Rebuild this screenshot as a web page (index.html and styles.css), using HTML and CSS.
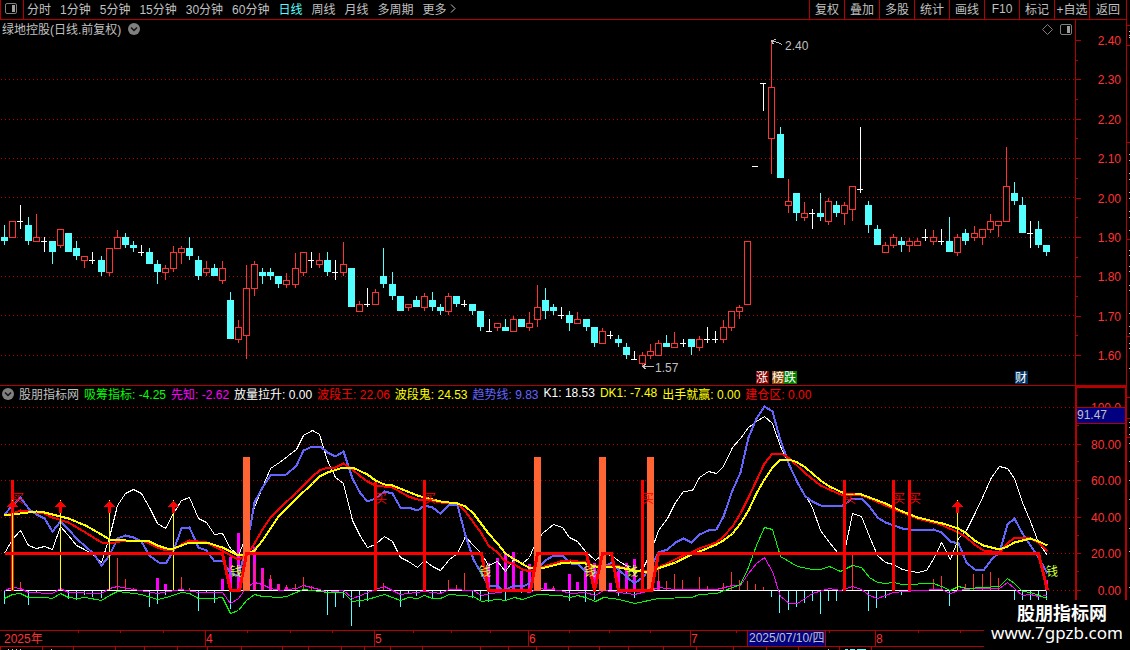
FILE: index.html
```html
<!DOCTYPE html>
<html lang="zh-CN">
<head>
    <meta charset="utf-8">
    <title>绿地控股 日线</title>
    <link rel="stylesheet" href="styles.css">
</head>
<body>
    <div class="app">
        <div class="main">
            <div class="topbar">
                <button class="panel-toggle" aria-label="侧栏">
                    <svg width="12" height="11" viewBox="0 0 12 11"><rect x="0.5" y="0.5" width="11" height="10" rx="1.5" fill="none" stroke="#808080"/><rect x="7" y="2" width="3" height="7" fill="#a0a0a0"/></svg>
                </button>
                <nav class="periods">
                    <button>分时</button>
                    <button>1分钟</button>
                    <button>5分钟</button>
                    <button>15分钟</button>
                    <button>30分钟</button>
                    <button>60分钟</button>
                    <button class="active">日线</button>
                    <button>周线</button>
                    <button>月线</button>
                    <button>多周期</button>
                    <button class="more">更多<svg width="6" height="9" viewBox="0 0 6 9"><path d="M1 0.5L5 4.5L1 8.5" fill="none" stroke="#c0c0c0"/></svg></button>
                </nav>
                <div class="tools">
                    <button>复权</button>
                    <button>叠加</button>
                    <button>多股</button>
                    <button>统计</button>
                    <button>画线</button>
                    <button>F10</button>
                    <button>标记</button>
                    <button>+自选</button>
                    <button>返回</button>
                </div>
            </div>

            <div class="pane price">
                <svg id="price-chart" class="chart"></svg>
                <div class="pane-head">
                    <span>绿地控股(日线.前复权)</span>
                    <button class="round" aria-label="菜单">
                        <svg width="12" height="12" viewBox="0 0 12 12"><circle cx="6" cy="6" r="6" fill="#808080"/><path d="M3 4.5L6 7.5L9 4.5" fill="none" stroke="#111" stroke-width="1.5"/></svg>
                    </button>
                    <div class="corner">
                        <svg width="11" height="11" viewBox="0 0 11 11"><path d="M5.5 0.5L10.5 5.5L5.5 10.5L0.5 5.5Z" fill="none" stroke="#808080"/></svg>
                        <svg width="12" height="11" viewBox="0 0 12 11"><rect x="0.5" y="0.5" width="11" height="10" rx="1.5" fill="none" stroke="#808080"/><rect x="7" y="2" width="3" height="7" fill="#a0a0a0"/></svg>
                    </div>
                </div>
            </div>

            <div class="pane indicator">
                <svg id="indicator-chart" class="chart"></svg>
                <div class="pane-head legend">
                    <button class="round" aria-label="指标菜单">
                        <svg width="12" height="12" viewBox="0 0 12 12"><circle cx="6" cy="6" r="6" fill="#808080"/><path d="M3 4.5L6 7.5L9 4.5" fill="none" stroke="#111" stroke-width="1.5"/></svg>
                    </button>
                    <span>股朋指标网</span>
                    <span class="green">吸筹指标: -4.25</span>
                    <span class="magenta">先知: -2.62</span>
                    <span class="white">放量拉升: 0.00</span>
                    <span class="red">波段王: 22.06</span>
                    <span class="yellow">波段鬼: 24.53</span>
                    <span class="blue">趋势线: 9.83</span>
                    <span class="white">K1: 18.53</span>
                    <span class="yellow">DK1: -7.48</span>
                    <span class="yellow">出手就赢: 0.00</span>
                    <span class="red">建仓区: 0.00</span>
                </div>
            </div>

            <div class="timeline">
                <svg id="time-axis" class="chart"></svg>
            </div>
            <div class="strip">
                <svg id="strip" class="chart"></svg>
            </div>
        </div>
        <div class="side">
            <svg id="side" class="chart"></svg>
        </div>
        <div class="watermark">
            <strong>股朋指标网</strong>
            <span>www.7gpzb.com</span>
        </div>
    </div>
    <script src="chart.js"></script>
</body>
</html>
```
FILE: styles.css
```css
* {
    box-sizing: border-box;
}

body {
    margin: 0;
    background-color: #000;
    color: #c0c0c0;
    font-family: "Liberation Sans", "Noto Sans CJK SC", sans-serif;
    font-size: 12px;
}

button {
    padding: 0;
    border: 0;
    background: none;
    color: inherit;
    font: inherit;
    white-space: nowrap;
    cursor: pointer;
}

.app {
    position: relative;
    display: flex;
    height: 100vh;
    overflow: hidden;
}

.main {
    flex: 1;
    min-width: 0;
    display: flex;
    flex-direction: column;
}

.side {
    position: relative;
    width: 4px;
    border-left: 1px solid #b40000;
}

/* top bar */
.topbar {
    flex: none;
    display: flex;
    height: 20px;
    border-bottom: 1px solid #b40000;
}

.topbar button {
    padding-bottom: 2px;
}

.panel-toggle {
    display: flex;
    align-items: center;
    justify-content: center;
    width: 24px;
    padding-right: 2px;
    border-left: 1px solid #b40000;
    border-right: 1px solid #b40000;
}

.periods {
    display: flex;
    flex: 1;
    gap: 9px;
    padding-left: 3px;
}

.periods .active {
    color: #54ffff;
}

.more {
    display: flex;
    align-items: center;
    gap: 3px;
}

.tools {
    display: flex;
}

.tools button {
    width: 35px;
    border-left: 1px solid #b40000;
}

.tools button:last-child {
    width: 37px;
}

/* chart panes */
.pane {
    position: relative;
    min-height: 0;
}

.price {
    flex: 366;
    border-bottom: 1px solid #b40000;
}

.indicator {
    flex: 244;
}

.chart {
    position: absolute;
    inset: 0;
    width: 100%;
    height: 100%;
    shape-rendering: crispEdges;
}

.chart text {
    font-size: 12px;
}

.pane-head {
    position: absolute;
    top: 0;
    left: 0;
    right: 0;
    display: flex;
    align-items: center;
    gap: 7px;
    height: 18px;
    padding-left: 2px;
    white-space: nowrap;
}

.pane-head span {
    padding-bottom: 2px;
}

.legend {
    gap: 5px;
    height: 16px;
}

.round {
    display: flex;
}

.corner {
    display: flex;
    gap: 7px;
    margin-left: auto;
    padding-right: 54px;
}

.timeline {
    position: relative;
    flex: none;
    height: 17px;
    border-top: 1px solid #b40000;
    border-bottom: 1px solid #b40000;
}

.strip {
    position: relative;
    flex: none;
    height: 3px;
}

.green { color: #00ff00; }
.magenta { color: #ff00ff; }
.white { color: #fff; }
.red { color: #ff0000; }
.yellow { color: #ffff00; }
.blue { color: #6464ff; }

.watermark {
    position: absolute;
    right: 0;
    bottom: 0;
    display: flex;
    flex-direction: column;
    align-items: center;
    width: 146px;
    height: 50px;
    padding-top: 3px;
    background-color: #000;
    color: #fff;
}

.watermark strong {
    padding-left: 10px;
    font-size: 18px;
    line-height: 22px;
}

.watermark span {
    font-family: "Noto Sans", "Open Sans", sans-serif;
    font-size: 17px;
    line-height: 16px;
}
```
FILE: chart.js
```js
const RED = '#b40000', UP = '#ff3232', DOWN = '#54ffff';

// one row per day: kind, high, body top, body bottom, low
// u = up (hollow), d = down (filled), w = open equals close
const candles = `
d 225 237 241 245|u 221 221 238 238|w 205 221 222 229|d 217 225 241 245|u 214 237 242 242|w 237 241 242 252
d 241 241 252 264|u 229 229 246 248|d 233 233 252 252|d 241 248 256 260|u 256 256 261 268|w 252 260 261 264
d 256 260 272 276|u 248 248 273 276|u 230 237 249 249|d 233 237 245 248|d 241 245 248 252|w 245 252 253 256
d 248 252 264 264|d 260 264 272 284|u 265 268 273 280|u 246 252 269 272|u 246 248 253 264|d 237 248 256 260
d 256 260 276 280|u 261 268 273 276|d 264 268 276 276|u 261 268 281 284|d 292 300 339 339|u 320 327 340 343
u 265 288 336 359|u 261 264 289 296|d 268 272 276 284|d 268 272 276 280|d 276 276 284 288|u 273 280 285 288
u 253 268 285 288|u 252 252 273 276|w 252 260 261 268|u 253 260 265 268|d 252 260 272 276|w 260 272 273 280
u 242 264 273 276|d 268 268 307 307|u 301 304 312 312|w 288 304 305 307|u 289 292 305 305|d 248 276 284 288
d 272 284 296 300|d 296 296 311 311|u 304 304 308 311|d 296 300 307 307|u 293 296 308 311|d 292 300 307 311
d 304 307 311 315|u 293 296 312 315|d 296 296 304 307|w 300 304 305 307|d 304 304 311 315|d 311 311 327 331
w 319 331 332 332|u 323 323 328 331|d 319 327 331 331|u 316 319 332 332|d 319 319 327 327|u 312 323 328 331
u 285 307 320 327|d 288 300 311 319|d 304 307 311 315|w 307 315 316 319|d 311 315 323 331|u 312 319 324 324
d 319 319 327 331|d 327 327 343 347|u 328 331 344 344|w 331 335 336 339|d 335 339 343 347|d 343 347 355 359
w 351 359 360 360|u 352 355 364 366|u 344 351 356 359|u 340 343 356 356|d 335 343 347 347|u 332 343 348 348
w 339 343 344 347|d 339 339 347 355|u 336 339 348 351|w 327 339 340 343|w 331 339 340 343|u 320 327 340 343
u 311 311 328 331|u 305 307 312 319|u 241 241 305 305|w 166 166 167 167|w 83 83 84 111|u 40 87 139 174
d 127 134 178 178|u 179 201 206 213|d 193 193 213 221|u 202 213 218 221|w 209 213 214 229|d 193 213 217 221
u 198 201 222 225|d 201 205 213 217|u 202 205 214 225|u 186 186 210 221|w 127 189 190 193|d 201 205 225 233
d 225 229 245 245|u 242 245 253 253|u 234 237 246 248|d 237 241 245 252|u 238 241 246 252|u 238 241 246 246
w 229 237 238 241|u 230 237 242 245|w 229 241 242 245|d 217 241 252 252|u 234 237 253 256|d 229 233 241 245
u 226 233 238 241|u 229 229 238 245|u 214 221 230 233|u 221 221 226 237|u 147 186 222 222|d 182 193 201 205
d 197 205 233 233|w 221 233 234 248|d 221 229 245 248|d 245 245 252 256
`.trim().split(/[|\n]/).map(row => row.split(' '));

const k1 = '4,553 12,539 20,530 28,545 36,548 44,546 52,549 60,526 68,535 76,545 84,549 92,554 101,562 109,537 117,505 125,493 133,489 141,493 149,507 157,523 165,528 173,513 181,500 189,497 198,518 206,522 214,534 222,533 230,548 238,555 246,535 254,507 262,487 270,468 279,462 296,449 303,435 312,430 319,434 327,460 335,477 343,483 352,520 360,536 367,547 375,544 384,536 392,541 400,557 408,561 417,567 424,560 432,566 440,570 449,559 457,553 465,536 473,545 481,553 488,565 497,561 505,571 514,558 522,563 529,557 533,547 542,533 553,524 562,527 569,537 577,541 585,551 595,560 603,553 611,555 619,561 627,566 634,573 643,567 650,553 658,530 667,518 675,502 683,491 692,490 699,477 708,471 716,473 723,466 732,447 740,438 748,427 756,421 764,416 772,423 780,446 789,465 797,482 805,495 812,507 820,530 829,542 837,552 844,552 852,513 861,516 869,536 877,555 885,562 893,564 902,569 917,572 926,570 934,557 941,542 950,559 958,538 966,530 974,514 983,495 991,477 999,466 1007,468 1014,478 1022,502 1030,521 1038,542 1047,555';
const trend = '4,514 12,505 20,497 28,508 36,514 44,518 52,531 60,521 68,529 77,539 93,553 101,565 109,555 117,538 125,535 133,537 141,541 149,555 158,562 166,562 173,550 181,528 189,527 198,547 206,550 214,561 222,560 230,573 238,575 243,557 250,525 254,502 262,487 270,475 286,474 296,465 303,450 312,446 320,446 327,452 335,456 343,451 352,478 360,493 367,501 375,498 384,491 392,493 400,507 408,507 417,510 424,505 432,507 440,513 449,504 457,505 465,535 473,559 481,573 488,585 497,585 501,589 505,589 514,585 522,586 529,583 537,568 545,560 553,555 562,555 570,563 577,563 585,571 595,573 603,567 611,562 619,570 627,577 634,583 643,576 650,567 658,552 667,549 675,542 683,538 691,542 699,534 708,530 716,529 723,516 732,490 740,472 748,437 756,418 764,406 772,411 780,440 789,465 797,482 805,496 812,501 820,505 840,506 844,504 852,498 861,498 869,506 877,517 885,522 902,528 917,530 933,529 941,532 950,541 958,543 966,562 974,569 983,570 991,559 999,552 1007,524 1014,518 1022,533 1030,545 1038,557 1047,573';
const king = '4,515 12,513 20,510 28,511 44,513 52,517 68,522 85,532 101,542 109,543 125,540 141,540 149,543 157,547 166,550 173,549 181,544 189,540 206,542 222,550 230,555 238,559 246,555 254,543 262,529 270,517 280,507 296,492 312,476 319,470 327,467 335,467 343,463 352,469 360,476 367,481 375,485 392,487 408,496 417,499 432,500 440,502 457,503 465,511 473,522 481,533 488,545 497,552 505,561 514,564 522,569 530,571 537,568 560,561 570,560 585,562 595,566 610,565 619,566 634,570 647,571 658,567 683,555 691,552 699,548 716,542 723,536 732,526 740,513 748,497 756,480 764,463 772,453 781,453 789,458 805,473 820,485 840,494 861,495 869,498 885,505 902,512 917,518 940,524 958,532 966,537 974,544 983,550 999,552 1007,543 1014,537 1027,537 1038,542 1047,551';
const ghost = '4,515 12,514 28,512 36,511 44,512 60,516 68,518 85,525 101,534 109,539 125,540 141,540 149,541 157,545 166,548 173,548 181,545 189,542 206,542 222,547 230,551 238,555 246,554 254,550 262,540 270,528 278,516 286,508 296,498 312,483 319,476 327,472 343,467 352,467 367,474 375,480 384,484 392,485 417,495 424,497 440,501 457,503 465,506 473,513 488,533 497,543 505,553 514,559 530,568 545,567 560,563 570,562 585,563 595,566 619,567 634,570 647,572 660,567 675,562 691,554 699,551 716,544 723,540 732,533 740,523 748,510 756,493 764,479 772,467 780,459 789,459 797,462 805,467 820,480 829,486 844,493 861,494 869,497 885,503 893,507 902,511 917,517 942,523 958,528 966,533 974,540 983,545 999,549 1007,546 1014,542 1030,538 1038,541 1047,545';
const area = '4,553 222,553 230,590 239,590 246,553 481,553 488,590 530,590 537,553 586,553 594,590 602,553 611,553 618,590 651,590 658,553 1038,553 1047,590';
const collect = '4,598 12,594 20,593 28,597 44,597 52,598 60,593 68,597 77,598 85,597 101,600 109,595 117,591 141,594 157,599 166,597 181,592 189,593 198,598 214,598 222,597 230,613 238,610 246,600 254,594 262,596 280,597 286,596 303,589 312,590 327,592 343,592 352,601 367,599 384,594 400,600 408,597 417,598 424,595 432,598 440,598 449,594 473,596 481,601 497,599 505,600 514,597 522,599 537,594 560,595 570,597 577,595 585,597 595,601 603,597 619,599 634,603 658,598 691,597 699,594 716,593 732,587 740,584 748,567 756,545 764,527 772,529 780,556 797,566 812,569 820,569 829,566 840,571 844,569 852,565 861,567 869,577 877,582 885,583 893,582 902,584 933,583 941,586 950,590 958,586 966,588 999,586 1007,578 1014,583 1022,591 1030,592 1047,598';
const prophet = '4,590 12,587 20,588 28,592 52,593 60,588 68,592 101,593 109,588 117,586 133,589 157,593 181,589 198,592 222,592 230,603 238,598 246,587 254,582 262,584 270,588 280,590 296,588 303,585 319,589 327,592 343,590 352,598 360,595 375,589 384,586 400,594 424,591 440,593 449,589 473,590 481,595 497,592 514,590 530,592 537,588 560,590 570,593 585,592 595,595 603,590 619,592 634,594 650,590 658,587 675,589 716,589 732,585 740,585 748,573 756,563 764,557 772,571 780,596 789,603 797,603 812,593 829,588 840,590 852,586 861,589 869,595 877,598 893,592 917,590 941,589 950,593 958,590 974,588 999,588 1007,582 1014,588 1022,595 1030,594 1038,596 1047,595';

// histogram bars: x and the end away from the zero line
const magentaBars = [[157,578],[165,584],[222,579],[230,557],[238,533],[254,547],[262,568],[270,579],[278,584],[286,587],[488,563],[497,558],[505,554],[513,552],[521,571],[529,564],[545,583],[553,588],[569,574],[577,582],[585,567],[594,563],[610,583],[618,571],[626,563],[634,559],[658,581],[1046,580]];
const redTicks = [[20,582],[117,558],[125,579],[133,588],[181,577],[189,588],[254,563],[262,571],[270,575],[278,584],[286,585],[295,584],[303,577],[311,586],[383,583],[424,583],[448,580],[456,585],[464,573],[553,586],[642,571],[658,567],[666,581],[674,574],[682,580],[699,577],[707,586],[723,583],[731,572],[739,580],[747,581],[755,584],[763,587],[852,555],[933,579],[941,576],[965,584],[973,574],[982,574],[990,572],[998,578]];
const cyanTicks = [[4,604],[28,605],[36,593],[68,599],[76,600],[84,595],[92,597],[101,598],[149,607],[157,604],[165,595],[198,611],[206,593],[214,603],[230,609],[327,615],[335,607],[343,598],[351,626],[359,607],[367,601],[400,607],[408,593],[416,596],[432,598],[440,593],[472,598],[480,600],[488,602],[505,600],[521,593],[569,601],[585,602],[594,600],[618,596],[626,594],[634,598],[771,597],[779,613],[788,610],[796,607],[804,603],[812,601],[820,614],[828,601],[836,601],[868,611],[876,608],[885,598],[901,595],[949,606],[1014,600],[1022,600],[1030,600],[1038,600],[1046,600]];

// wraps an svg; coordinates are on a w x h board that starts at y = top
function board(id, w, h, top) {
    const svg = document.getElementById(id);
    const box = svg.getBoundingClientRect();
    const X = x => Math.round(x * box.width / w);
    const Y = y => Math.round((y - top) * box.height / h);
    svg.innerHTML = '';

    function add(tag, attrs, text) {
        const el = document.createElementNS('http://www.w3.org/2000/svg', tag);
        for (const key in attrs) el.setAttribute(key, attrs[key]);
        if (text) el.textContent = text;
        svg.appendChild(el);
    }
    return {
        rect(x, y, width, y2, fill) {
            add('rect', { x: X(x), y: Y(y), width: width, height: Math.max(Y(y2) - Y(y), 1), fill });
        },
        frame(x, y, width, y2, stroke) {
            add('rect', { x: X(x) + 0.5, y: Y(y) + 0.5, width: width - 1, height: Y(y2) - Y(y) - 1, fill: '#000', stroke });
        },
        hline(x, x2, y, fill) {
            add('rect', { x: X(x), y: Y(y), width: X(x2) - X(x), height: 1, fill });
        },
        dots(x, x2, y) {
            add('line', { x1: X(x), x2: X(x2), y1: Y(y) + 0.5, y2: Y(y) + 0.5, stroke: RED, 'stroke-dasharray': '1 3' });
        },
        line(points, stroke, width) {
            const list = points.split(' ').map(p => {
                const [x, y] = p.split(',');
                return (X(x) + 0.5) + ',' + (Y(y) + 0.5);
            });
            add('polyline', { points: list.join(' '), fill: 'none', stroke, 'stroke-width': width, 'stroke-linejoin': 'round' });
        },
        text(x, y, text, fill, anchor) {
            add('text', { x: X(x), y: Y(y) + 4, fill, 'text-anchor': anchor || 'start' }, text);
        },
        badge(x, y, text, fill) {
            add('rect', { x: X(x), y: Y(y), width: 13, height: 13, fill });
            add('text', { x: X(x), y: Y(y) + 11, fill: '#fff' }, text);
        },
        arrow(x, y) {
            add('path', { d: `M${X(x) + 0.5} ${Y(y)}l5.5 6h-4v6h-3v-6h-4z`, fill: '#f00' });
        }
    };
}

function drawPrice() {
    const b = board('price-chart', 1126, 365, 20);
    [79, 119, 158, 197, 237, 276, 315, 355].forEach(y => b.dots(1, 1075, y));

    b.rect(1075, 20, 1, 385, RED);
    ['2.40', '2.30', '2.20', '2.10', '2.00', '1.90', '1.80', '1.70', '1.60'].forEach((label, i) => {
        const y = 40 + i * 39.33;
        b.hline(1075, 1081, y, RED);
        if (i < 8) b.hline(1075, 1078, y + 19.6, RED);
        b.text(1121, y + 1, label, UP, 'end');
    });

    candles.forEach(([kind, high, top, bottom, low], i) => {
        const x = Math.floor(4 + i * 8.084);
        if (kind === 'u') {
            b.rect(x, high, 1, low, UP);
            b.frame(x - 3, top, 7, bottom, UP);
        } else if (kind === 'd') {
            b.rect(x, high, 1, low, DOWN);
            b.rect(x - 3, top, 7, bottom, DOWN);
        } else {
            b.rect(x, high, 1, low, '#fff');
            b.rect(x - 3, top, 6, bottom, '#fff');
        }
    });

    b.line('776,39 771,40 773,44', '#c0c0c0', 1);
    b.line('771,40 777,42 782,44', '#c0c0c0', 1);
    b.text(785, 46, '2.40', '#c0c0c0');
    b.line('653,366 642,366 646,363', '#c0c0c0', 1);
    b.line('642,366 646,369', '#c0c0c0', 1);
    b.text(655, 368, '1.57', '#c0c0c0');

    b.badge(756, 371, '涨', '#800000');
    b.badge(772, 371, '榜', '#8a4500');
    b.badge(784, 371, '跌', '#008000');
    b.badge(1015, 371, '财', '#003366');
}

function drawIndicator() {
    const b = board('indicator-chart', 1126, 244, 386);
    [407, 444, 480, 517, 553, 590].forEach(y => b.dots(1, 1075, y));

    b.rect(1075, 386, 2, 630, RED);
    b.rect(1075, 386, 51, 388, RED);
    b.rect(1125, 386, 1, 630, RED);
    ['100.0', '80.00', '60.00', '40.00', '20.00', '0.00'].forEach((label, i) => {
        const y = 407 + i * 36.6;
        b.hline(1077, 1081, y, RED);
        if (i < 5) b.hline(1077, 1079, y + 18, RED);
        b.text(1121, y + 1, label, UP, 'end');
    });
    b.rect(1077, 407, 48, 424, RED);
    b.rect(1077, 408, 48, 423, '#000080');
    b.text(1077, 415, '91.47', '#c0c0c0');

    magentaBars.forEach(([x, y]) => b.rect(x - 1, y, 3, 590, '#ff00ff'));
    redTicks.forEach(([x, y]) => b.rect(x, y, 1, 590, UP));
    cyanTicks.forEach(([x, y]) => b.rect(x, 590, 1, y, DOWN));
    b.hline(4, 1047, 590, '#fff');

    b.line(prophet, '#ff00ff', 1);
    b.line(collect, '#00ff00', 1);
    b.line(k1, '#fff', 1);
    b.line(trend, '#6464ff', 2);
    b.line(king, '#ff0000', 2);
    b.line(ghost, '#ffff00', 2);

    [[11, 480], [374, 482], [423, 480], [641, 480], [843, 480], [892, 480], [908, 480]]
        .forEach(([x, y]) => b.rect(x, y, 3, 591, '#f00'));
    [12, 60, 109, 173, 957].forEach(x => {
        b.rect(x, 500, 1, 590, '#ffff00');
        b.arrow(x, 501);
    });
    [243, 534, 599, 647].forEach(x => b.rect(x, 457, 7, 591, '#ff6432'));
    b.line(area, '#ff0000', 3);

    [12, 375, 424, 642, 844, 893, 909].forEach(x => b.text(x, 499, '买', '#f00'));
    [230, 479, 584, 626, 1046].forEach(x => b.text(x, 572, '钱', '#ccff33'));
}

function drawTimeAxis() {
    const b = board('time-axis', 1126, 15, 631);
    [78, 120, 163, 247, 290, 332, 413, 451, 490, 569, 609, 650, 736, 829, 918, 960]
        .forEach(x => b.rect(x, 631, 1, 633, RED));
    b.text(4, 639, '2025年', UP);
    [[205, '4'], [374, '5'], [528, '6'], [690, '7'], [875, '8']].forEach(([x, label]) => {
        b.rect(x, 631, 1, 646, RED);
        b.text(x + 1, 639, label, UP);
    });
    b.rect(747, 631, 79, 646, RED);
    b.rect(748, 631, 77, 646, '#000080');
    b.text(749, 638, '2025/07/10/四', '#c0c0c0');
}

function drawStrip() {
    const b = board('strip', 1126, 3, 647);
    [0, 42, 73, 115, 144, 177, 207, 241, 282, 308, 341, 364, 390, 422, 480, 508, 536, 568, 599, 628, 663, 696, 733, 766, 798, 839, 871]
        .forEach(x => b.rect(x, 647, 1, 650, RED));
    [8, 12, 16, 20, 51, 828].forEach(x => b.rect(x, 649, 1, 650, '#c0c0c0'));
    [[845, 3], [850, 5], [857, 9]].forEach(([x, w]) => b.rect(x, 649, w, 650, DOWN));
}

function drawSide() {
    const b = board('side', 3, 650, 0);
    [25, 45, 142, 239, 336, 397, 418, 437].forEach(y => b.rect(0, y, 3, y + 1, RED));
    [31, 35, 37, 154, 160, 173, 179, 192, 198, 211, 217, 230, 250, 255, 266, 271, 285, 290, 313, 326, 333, 343, 348, 368, 422, 427, 434, 443, 461, 480, 499, 528, 551, 587]
        .forEach(y => b.rect(2, y, 1, y + 1, '#c0c0c0'));
}

function draw() {
    drawPrice();
    drawIndicator();
    drawTimeAxis();
    drawStrip();
    drawSide();
}

draw();
window.addEventListener('resize', draw);
```
